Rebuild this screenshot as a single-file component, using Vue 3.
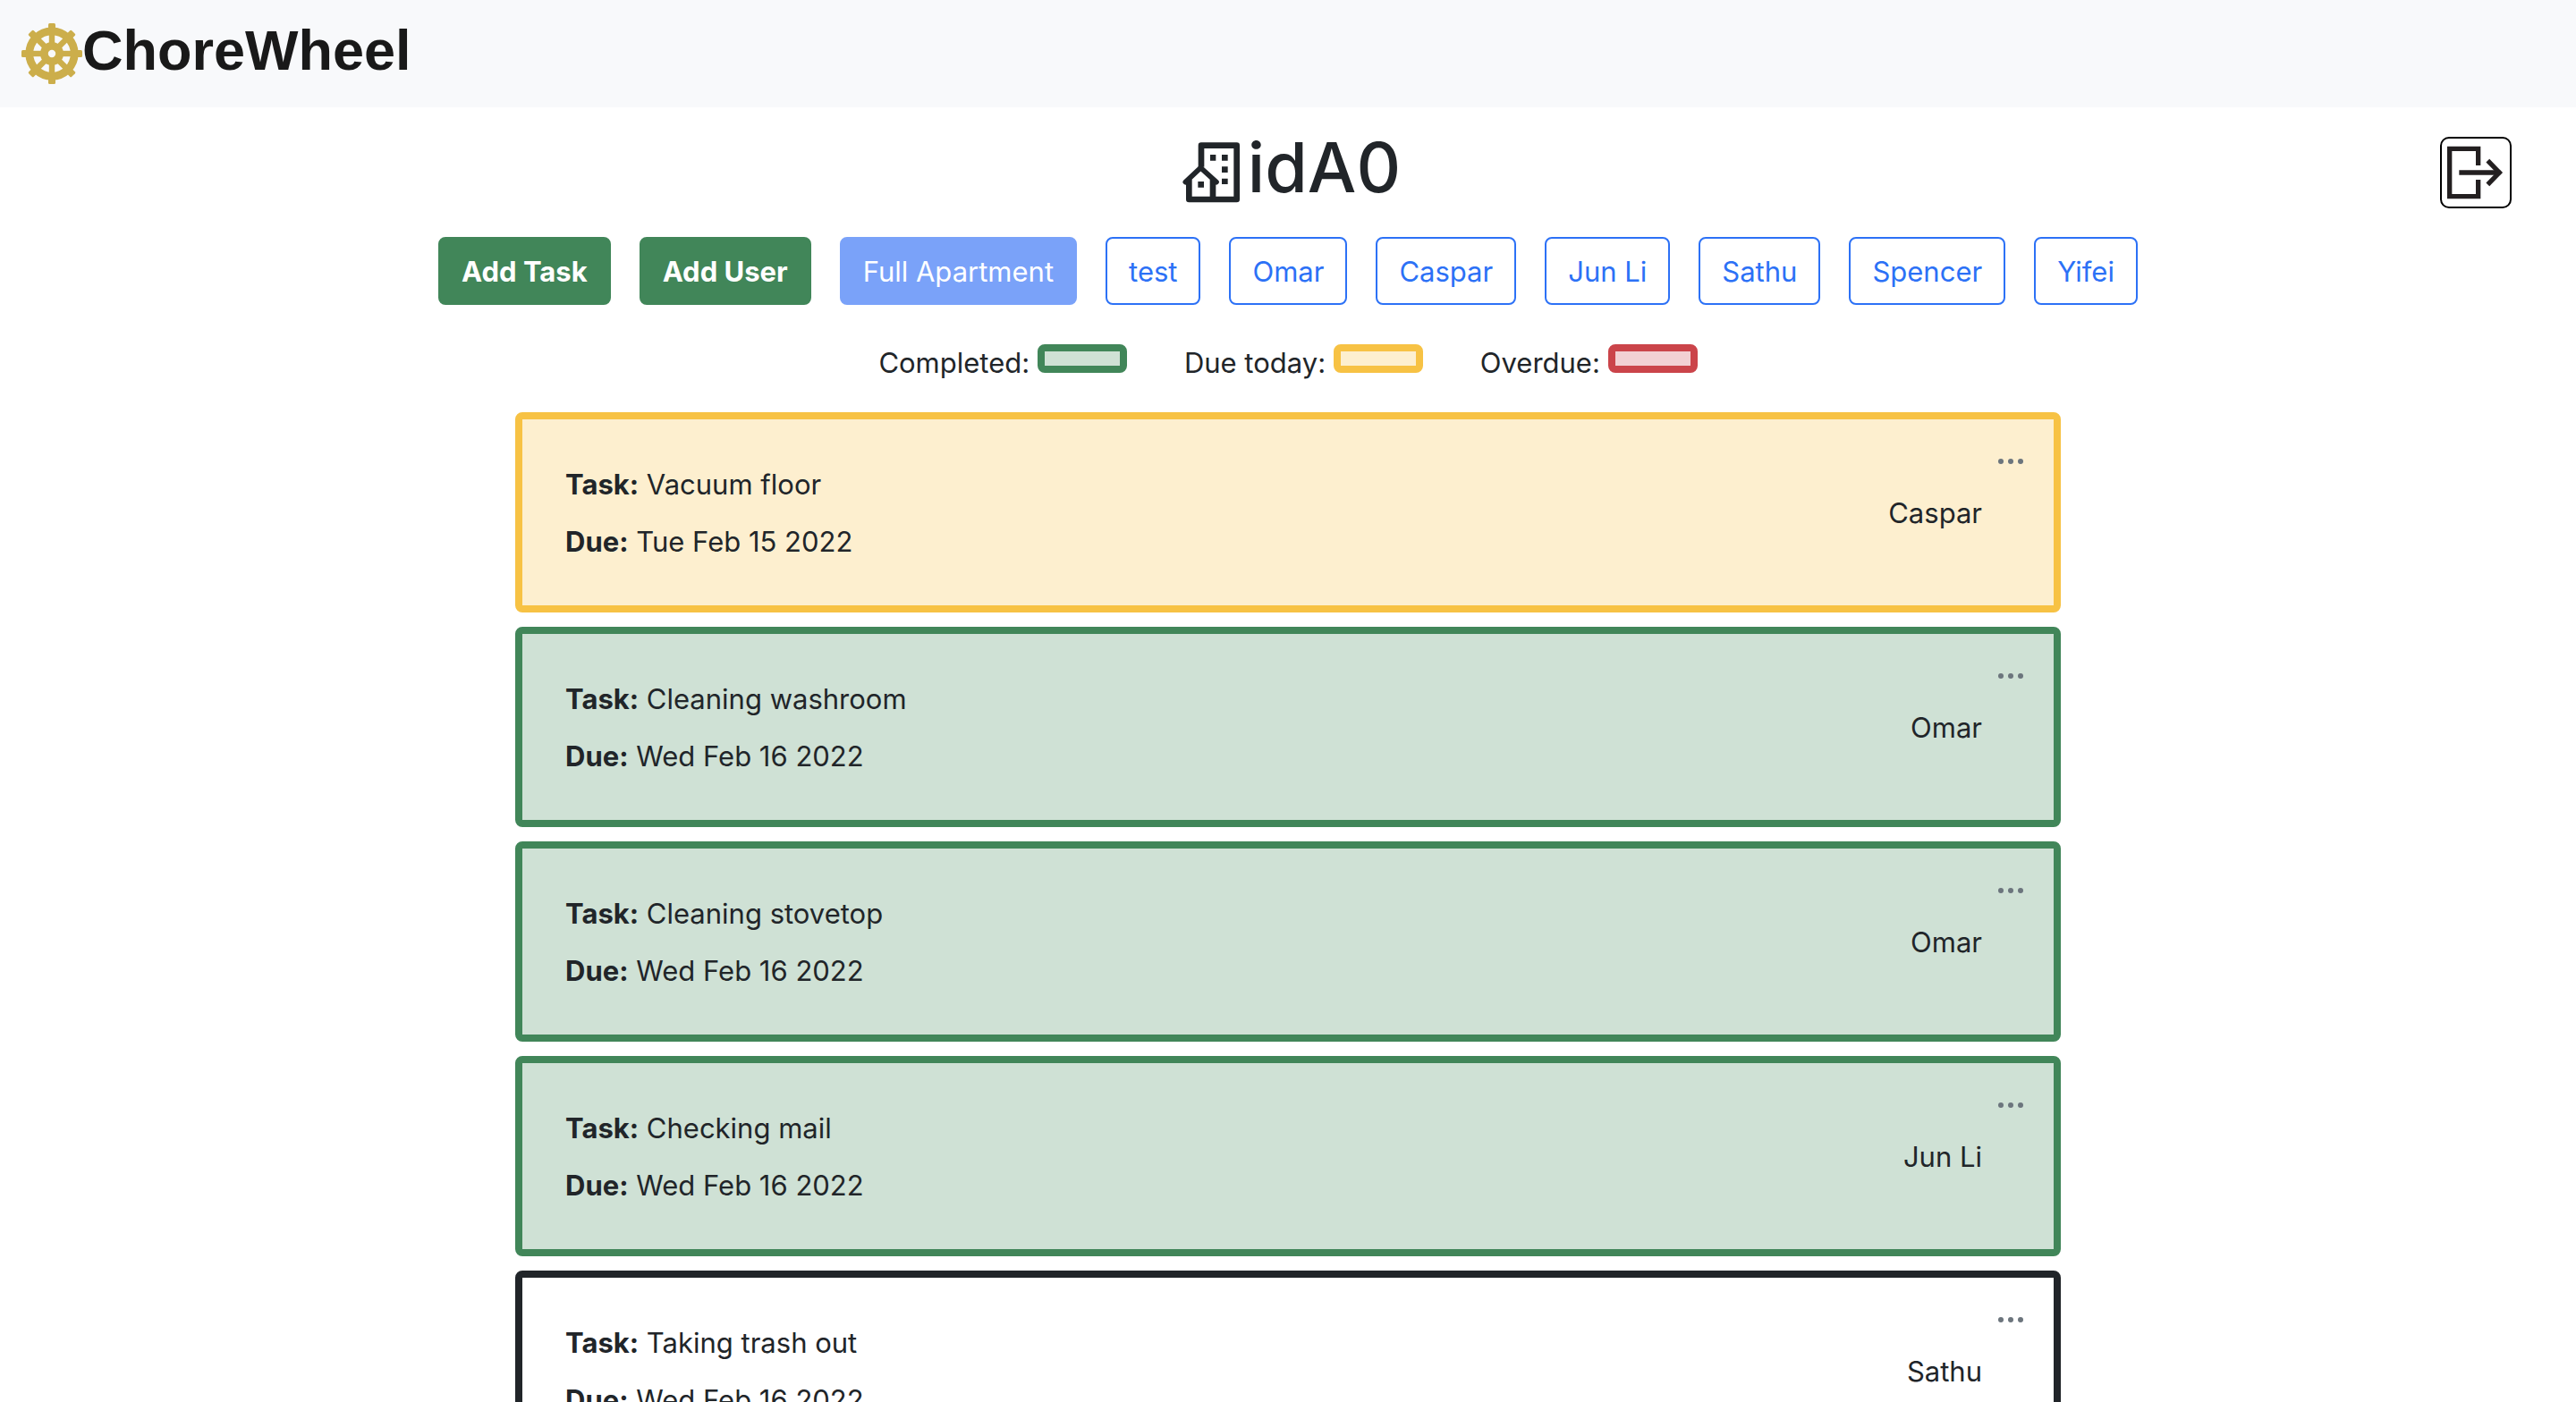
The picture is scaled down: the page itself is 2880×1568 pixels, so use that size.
<script setup>
const filters = [
  { label: 'Full Apartment', active: true },
  { label: 'test' },
  { label: 'Omar' },
  { label: 'Caspar' },
  { label: 'Jun Li' },
  { label: 'Sathu' },
  { label: 'Spencer' },
  { label: 'Yifei' },
]

const legend = [
  { label: 'Completed:', status: 'completed' },
  { label: 'Due today:', status: 'today' },
  { label: 'Overdue:', status: 'overdue' },
]

const tasks = [
  { name: 'Vacuum floor', due: 'Tue Feb 15 2022', user: 'Caspar', status: 'today' },
  { name: 'Cleaning washroom', due: 'Wed Feb 16 2022', user: 'Omar', status: 'completed' },
  { name: 'Cleaning stovetop', due: 'Wed Feb 16 2022', user: 'Omar', status: 'completed' },
  { name: 'Checking mail', due: 'Wed Feb 16 2022', user: 'Jun Li', status: 'completed' },
  { name: 'Taking trash out', due: 'Wed Feb 16 2022', user: 'Sathu', status: 'pending' },
]

const spokes = [0, 45, 90, 135, 180, 225, 270, 315]
</script>

<template>
  <div class="page">
    <header class="navbar">
      <a class="brand" href="#">
        <svg class="wheel" viewBox="0 0 68 68" aria-hidden="true">
          <circle cx="34" cy="34" r="25.2" fill="none" stroke="currentColor" stroke-width="8.8" />
          <circle cx="34" cy="34" r="8.6" fill="none" stroke="currentColor" stroke-width="8.8" />
          <g v-for="angle in spokes" :key="angle" :transform="`rotate(${angle} 34 34)`" fill="currentColor">
            <rect x="30.8" y="8" width="6.4" height="18" />
            <rect x="30" y="0" width="8" height="10" rx="1.5" />
          </g>
        </svg>
        <span>ChoreWheel</span>
      </a>
    </header>

    <main>
      <div class="title-row">
        <h1>
          <svg class="building" viewBox="66 87 195 204" aria-hidden="true">
            <g fill="none" stroke="currentColor" stroke-linejoin="round">
              <path d="M129 170V98H248V279H88V212M168 212V279" stroke-width="20" />
              <path d="M76 221L127 173L180 221" stroke-width="17" stroke-linecap="round" stroke-linejoin="miter" />
            </g>
            <path d="M159 129h19v20h-19zM198 129h20v20h-20zM198 169h20v20h-20zM198 209h20v19h-20zM118 219h20v20h-20z" fill="currentColor" />
          </svg>
          <span>idA0</span>
        </h1>
        <button class="logout" type="button" aria-label="Log out">
          <svg viewBox="90 75 228 228" fill="none" stroke="#231f20" stroke-width="16" aria-hidden="true">
            <path d="M212 165V109H116V269H212V213" />
            <path d="M148 189H283" />
            <path d="M244 149L283 189L244 229" />
          </svg>
        </button>
      </div>

      <nav class="actions">
        <button class="btn add" type="button">Add Task</button>
        <button class="btn add" type="button">Add User</button>
        <button
          v-for="filter in filters"
          :key="filter.label"
          class="btn"
          :class="filter.active ? 'selected' : 'outline'"
          type="button"
        >{{ filter.label }}</button>
      </nav>

      <div class="legend">
        <div v-for="item in legend" :key="item.status" class="legend-item">
          {{ item.label }} <span class="swatch" :class="item.status"></span>
        </div>
      </div>

      <ul class="tasks">
        <li v-for="task in tasks" :key="task.name" class="card" :class="task.status">
          <div class="details">
            <p><strong>Task:</strong> {{ task.name }}</p>
            <p><strong>Due:</strong> {{ task.due }}</p>
          </div>
          <span class="user">{{ task.user }}</span>
          <button class="more" type="button" aria-label="Task options">
            <svg viewBox="0 0 32 32" fill="currentColor" aria-hidden="true">
              <circle cx="5" cy="16" r="3" />
              <circle cx="16" cy="16" r="3" />
              <circle cx="27" cy="16" r="3" />
            </svg>
          </button>
        </li>
      </ul>
    </main>
  </div>
</template>

<style>
body {
  margin: 0;
  background: #fff;
}
</style>

<style scoped>
.page {
  height: 100vh;
  overflow: hidden;
  color: #212529;
  font-family: Inter, "Liberation Sans", sans-serif;
  font-size: 31px;
  line-height: 48px;
}

button {
  box-sizing: border-box;
  margin: 0;
  font: inherit;
  cursor: pointer;
}

svg {
  display: block;
}

.navbar {
  display: flex;
  align-items: center;
  height: 120px;
  padding: 0 24px;
  background: #f8f9fb;
}

.brand {
  display: flex;
  align-items: center;
  color: #191919;
  font: bold 63px/72px "Liberation Sans", Arial, sans-serif;
  text-decoration: none;
}

.brand span {
  padding-bottom: 8px;
}

.wheel {
  width: 68px;
  height: 68px;
  color: #ccae4b;
}

.title-row {
  display: grid;
  grid-template-columns: 1fr auto 1fr;
  align-items: center;
  padding: 27px 72px 0;
}

h1 {
  display: flex;
  grid-column: 2;
  align-items: center;
  gap: 8px;
  margin: 0;
  padding-left: 8px;
  font-size: 77px;
  font-weight: 500;
  line-height: 80px;
}

h1 span {
  padding-bottom: 12px;
}

.building {
  width: 65px;
  height: 68px;
}

.logout {
  justify-self: end;
  width: 80px;
  height: 80px;
  padding: 0;
  border: 2px solid #000;
  border-radius: 10px;
  background: #fff;
}

.actions {
  display: flex;
  justify-content: center;
  gap: 32px;
  padding-top: 26px;
}

.btn {
  padding: 13px 24px 11px;
  border: 2px solid transparent;
  border-radius: 8px;
  white-space: nowrap;
}

.add {
  border-color: #418659;
  background: #418659;
  color: #fff;
  font-weight: 700;
}

.selected {
  border-color: #7aa2f9;
  background: #7aa2f9;
  color: #fff;
}

.outline {
  border-color: #2c71f6;
  background: #fff;
  color: #2c71f6;
}

.legend {
  display: flex;
  justify-content: center;
  gap: 64px;
  padding-top: 41px;
}

.swatch {
  display: inline-block;
  box-sizing: border-box;
  width: 100px;
  height: 32px;
  border: 8px solid;
  border-radius: 8px;
}

.tasks {
  display: flex;
  flex-direction: column;
  gap: 16px;
  width: 60%;
  margin: 31px auto 0;
  padding: 0;
  list-style: none;
}

.card {
  display: flex;
  align-items: flex-start;
  padding: 31px 32px 31px 48px;
  border: 8px solid;
  border-radius: 8px;
}

.details {
  flex: 1;
  padding-top: 18px;
}

.details p {
  margin: 0 0 16px;
}

strong {
  font-weight: 700;
}

.user {
  padding-top: 50px;
}

.more {
  width: 32px;
  height: 32px;
  margin-left: 16px;
  padding: 0;
  border: 0;
  background: none;
  color: #6c757d;
}

.completed {
  border-color: #418659;
  background: #cfe1d5;
}

.today {
  border-color: #f7c244;
  background: #fdefcf;
}

.overdue {
  border-color: #cb444a;
  background: #f2d0d3;
}

.pending {
  border-color: #212529;
  background: #fff;
}
</style>
